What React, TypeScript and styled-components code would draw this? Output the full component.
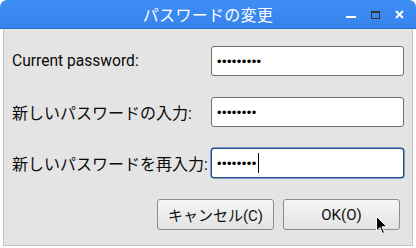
import { createGlobalStyle, styled } from "styled-components";

const GlobalStyle = createGlobalStyle`
  html, body {
    margin: 0;
    padding: 0;
    background: #ffffff;
  }
  body {
    font-family: Roboto, "Noto Sans CJK JP", sans-serif;
  }
`;

const Window = styled.div`
  position: relative;
  width: 416px;
  height: 246px;
  display: flex;
  flex-direction: column;
`;

const TitleBar = styled.div`
  height: 29px;
  flex-shrink: 0;
  background: linear-gradient(#3f8ef4, #3583ec);
  border-radius: 7px 7px 0 0;
  border-bottom: 1px solid #2a6fcc;
  box-sizing: border-box;
  display: flex;
  align-items: center;
  justify-content: center;
  position: relative;
`;

const Title = styled.div`
  color: #ffffff;
  font-family: "Noto Sans CJK JP", sans-serif;
  font-size: 16px;
  letter-spacing: 0.3px;
`;

const Controls = styled.div`
  position: absolute;
  right: 12px;
  top: 0;
  height: 29px;
  display: flex;
  align-items: center;
  gap: 15px;
`;

const Body = styled.div`
  flex: 1;
  background: #e4e4e4;
  border: 1px solid #c4c4c4;
  border-top: none;
  margin: 0 3px;
  box-sizing: border-box;
  padding: 17px 8px 0 8px;
  display: flex;
  flex-direction: column;
`;

const Form = styled.div`
  display: grid;
  grid-template-columns: 199px 193px;
  row-gap: 21px;
  align-items: center;
`;

const Label = styled.div`
  font-size: 15.6px;
  color: #0a0a0a;
  white-space: nowrap;
`;

const Jp = styled.span`
  font-size: 16px;
`;

const Field = styled.div<{ $focused?: boolean }>`
  height: 30px;
  box-sizing: border-box;
  background: #ffffff;
  border: 1px solid ${(p) => (p.$focused ? "#1d4f91" : "#6f6f6f")};
  box-shadow: ${(p) => (p.$focused ? "0 0 0 0.5px #1d4f91" : "none")};
  border-radius: 3px;
  padding: 0 5px;
  display: flex;
  align-items: center;
  font-family: "Liberation Sans", sans-serif;
  font-size: 13px;
  letter-spacing: 0.4px;
  color: #000000;
`;

const Caret = styled.span`
  display: inline-block;
  width: 1px;
  height: 20px;
  background: #000000;
  margin-left: 1px;
`;

const Buttons = styled.div`
  display: flex;
  justify-content: flex-end;
  gap: 9px;
  padding-right: 4px;
  margin-top: 21px;
`;

const Button = styled.button`
  width: 117px;
  height: 31px;
  box-sizing: border-box;
  border: 1px solid #8c8c8c;
  border-radius: 3px;
  background: linear-gradient(#f6f6f6, #e2e2e2);
  font-family: Roboto, "Noto Sans CJK JP", sans-serif;
  font-size: 15px;
  color: #111111;
  padding: 0;
`;

const Pointer = styled.svg`
  position: absolute;
  left: 376px;
  top: 216px;
`;

export default function App() {
  return (
    <>
      <GlobalStyle />
      <Window>
        <TitleBar>
          <Title>パスワードの変更</Title>
          <Controls>
            <svg width="10" height="8" viewBox="0 0 10 8">
              <rect x="0" y="5" width="10" height="2" fill="#ffffff" />
            </svg>
            <svg width="9" height="8" viewBox="0 0 9 8">
              <rect x="0.5" y="0.5" width="8" height="7" fill="none" stroke="#333333" />
              <rect x="0" y="0" width="9" height="2" fill="#333333" />
            </svg>
            <svg width="9" height="9" viewBox="0 0 9 9">
              <path d="M1 1 L8 8 M8 1 L1 8" stroke="#ffffff" strokeWidth="2" />
            </svg>
          </Controls>
        </TitleBar>
        <Body>
          <Form>
            <Label>Current password:</Label>
            <Field>•••••••••</Field>
            <Label>
              <Jp>新しいパスワードの入力</Jp>:
            </Label>
            <Field>••••••••</Field>
            <Label>
              <Jp>新しいパスワードを再入力</Jp>:
            </Label>
            <Field $focused>
              ••••••••
              <Caret />
            </Field>
          </Form>
          <Buttons>
            <Button>キャンセル(C)</Button>
            <Button>OK(O)</Button>
          </Buttons>
        </Body>
        <Pointer width="12" height="19" viewBox="0 0 12 19">
          <path
            d="M0.5 0.5 L0.5 15 L4 11.5 L6.5 17.5 L8.5 16.5 L6 10.8 L11 10.8 Z"
            fill="#000000"
            stroke="#ffffff"
            strokeWidth="1"
          />
        </Pointer>
      </Window>
    </>
  );
}
